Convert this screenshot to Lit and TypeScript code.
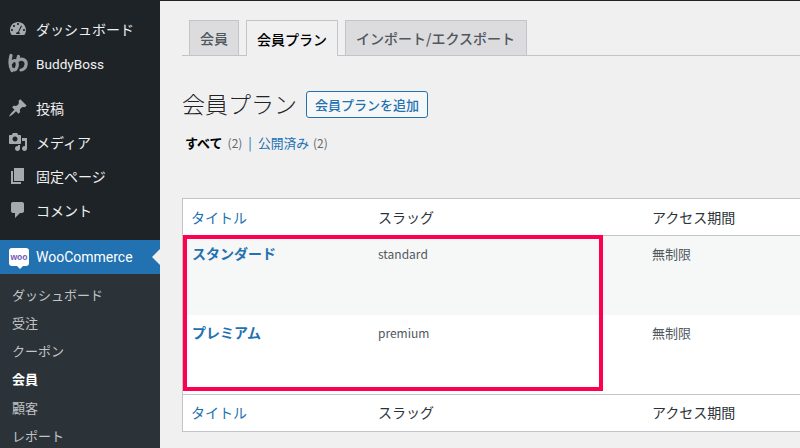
import { LitElement, html, css, svg } from "lit";
import { customElement } from "lit/decorators.js";

const icons = {
  dash: svg`<path d="M3.76 16h12.48c1.1-1.37 1.76-3.11 1.76-5 0-4.42-3.58-8-8-8s-8 3.58-8 8c0 1.89.66 3.63 1.76 5zM10 4c.55 0 1 .45 1 1s-.45 1-1 1-1-.45-1-1 .45-1 1-1zM6 6c.55 0 1 .45 1 1s-.45 1-1 1-1-.45-1-1 .45-1 1-1zm8.01 1L11 13c.6.5 1 1.2 1 2H8c0-1.1.9-2 2-2l3-6.5 1.01.5zM4 10c.55 0 1 .45 1 1s-.45 1-1 1-1-.45-1-1 .45-1 1-1zm12 0c.55 0 1 .45 1 1s-.45 1-1 1-1-.45-1-1 .45-1 1-1z"/>`,
  pin: svg`<path d="M10.44 3.02l1.82-1.82 6.36 6.35-1.83 1.82c-1.05-.68-2.48-.57-3.41.36l-.75.75c-.92.93-1.04 2.35-.35 3.41l-1.83 1.82-2.41-2.41-2.8 2.79c-.42.42-3.38 2.71-3.8 2.29s1.86-3.39 2.28-3.81l2.79-2.79L4.1 9.36l1.83-1.82c1.05.69 2.48.57 3.4-.36l.75-.75c.93-.92 1.05-2.35.36-3.41z"/>`,
  media: svg`<path d="M13 11V4c0-.55-.45-1-1-1h-1.67L9 1H5L3.67 3H2c-.55 0-1 .45-1 1v7c0 .55.45 1 1 1h10c.55 0 1-.45 1-1zM7 4.500c1.380 0 2.500 1.120 2.500 2.500S8.380 9.500 7 9.500 4.500 8.380 4.500 7 5.620 4.500 7 4.500zM14 6h5v10.500c0 1.380-1.120 2.500-2.500 2.500S14 17.880 14 16.500s1.120-2.500 2.500-2.500c.17 0 .34.02.5.05V9h-3V6zm-4 8.050V13h2v3.500c0 1.380-1.120 2.500-2.500 2.500S7 17.880 7 16.500 8.120 14 9.500 14c.17 0 .34.02.5.05z"/>`,
  page: svg`<path d="M6 15V2h10v13H6zm-1 1h8v2H3V5h2v11z"/>`,
  comment: svg`<path d="M5 2h9c1.100 0 2 .9 2 2v7c0 1.100-.9 2-2 2h-2l-5 5v-5H5c-1.100 0-2-.9-2-2V4c0-1.100.9-2 2-2z"/>`,
};

@customElement("app-root")
export class AppRoot extends LitElement {
  static styles = css`
    :host {
      display: block;
      width: 800px;
      height: 448px;
      overflow: hidden;
      background: #f0f0f1;
      font-family: "Noto Sans CJK JP", "Noto Sans", sans-serif;
      font-size: 13px;
      color: #3c434a;
    }
    .page { display: flex; width: 800px; height: 448px; }
    .side { width: 160px; flex: none; background: #1d2327; color: #f0f0f1; padding-top: 12px; box-sizing: border-box; }
    .item { height: 34px; display: flex; align-items: center; font-size: 14px; }
    .item svg { width: 20px; height: 20px; margin-left: 8px; fill: #a7aaad; flex: none; }
    .item span { margin-left: 8px; }
    .item .lat { font-family: Roboto, sans-serif; }
    .item .bbt { font-size: 13.600px; padding-top: 2px; }
    .item svg.bb { fill: none; stroke: #9a9da0; stroke-width: 3.200; stroke-linecap: round; }
    .g1 { margin-bottom: 11px; }
    .woo { background: #2271b1; color: #fff; margin-top: 13px; position: relative; }
    .woo .badge { position: relative; width: 20px; height: 18px; margin: -1px 0 0 9px; background: #fff; border-radius: 3px; color: #6f5bb5; font: 700 8.500px "Liberation Sans", sans-serif; display: flex; align-items: center; justify-content: center; flex: none; }
    .woo .badge::after { content: ""; position: absolute; left: 8px; bottom: -3px; border: 3px solid transparent; border-top-color: #fff; border-bottom-width: 0; }
    .woo span { margin-left: 7px; }
    .woo .arrow { position: absolute; right: 0; top: 9px; border: 8px solid transparent; border-right-color: #f0f0f1; border-left-width: 0; }
    .sub { background: #2c3338; padding-top: 6.300px; height: 200px; font-size: 13px; color: #c3c4c7; }
    .sub div { height: 28.200px; display: flex; align-items: center; padding-left: 12px; }
    .sub .on { color: #fff; font-weight: 700; }
    .main { flex: 1; min-width: 0; padding: 0 0 0 22px; border-top: 1px solid #1d2327; }
    .tabs { display: flex; gap: 7px; height: 35px; margin-top: 19px; border-bottom: 1px solid #c3c4c7; padding-left: 7px; box-sizing: content-box; }
    .tab { border: 1px solid #c3c4c7; border-bottom: none; background: #dcdcde; color: #50575e; font-weight: 500; font-size: 14px; padding: 0 11px 0 10px; display: flex; align-items: center; height: 34px; }
    .tab.short { padding: 0 10px; }
    .tab.on { background: #f0f0f1; color: #000; height: 35px; margin-bottom: -1px; padding: 0 10px; }
    .head { display: flex; align-items: center; margin-top: 32px; height: 32px; }
    h1 { margin: 0 0 3px; font-weight: 300; font-size: 23px; color: #1d2327; }
    .btn { margin-left: 9px; border: 1px solid #2271b1; border-radius: 3px; color: #2271b1; background: #f6f7f7; font-size: 13px; font-weight: 500; height: 27px; display: flex; align-items: center; padding: 0 8px; box-sizing: border-box; }
    .views { display: flex; align-items: center; margin-top: 12px; margin-left: 3px; font-size: 13px; color: #646970; height: 20px; }
    .views b { color: #000; font-weight: 700; margin-right: 5px; }
    .views a { color: #2271b1; font-size: 12.800px; margin-right: 4px; }
    .views em { font-style: normal; font-size: 12px; }
    .views i { font-style: normal; color: #2271b1; margin: 0 6px; }
    .wrap { position: relative; margin-top: 46px; }
    table { width: 640px; border-collapse: separate; border-spacing: 0; background: #fff; border: 1px solid #c3c4c7; table-layout: fixed; }
    col.a { width: 187px; } col.b { width: 274px; }
    th, td { text-align: left; font-weight: 400; padding: 0 0 0 8px; vertical-align: top; }
    th { height: 36px; vertical-align: middle; font-size: 14px; color: #2c3338; }
    th.link { color: #2271b1; }
    thead th { border-bottom: 1px solid #c3c4c7; }
    tfoot th { border-top: 1px solid #c3c4c7; height: 34px; padding-bottom: 2px; }
    td { height: 79px; padding-top: 7px; box-sizing: border-box; font-size: 12px; color: #50575e; line-height: 22px; }
    td.t { font-size: 14px; font-weight: 700; color: #2271b1; line-height: 20px; padding-left: 9px; }
    td.c { font-size: 13px; }
    tr.alt td { background: #f6f7f7; }
    .mark { position: absolute; left: 1px; top: 37px; width: 420px; height: 156px; border: 4px solid #ff0050; box-sizing: border-box; }
  `;

  private icon(p: unknown) {
    return html`<svg viewBox="0 0 20 20">${p}</svg>`;
  }

  render() {
    return html`<div class="page">
      <nav class="side">
        <div class="item">${this.icon(icons.dash)}<span>ダッシュボード</span></div>
        <div class="item g1"><svg class="bb" viewBox="0 0 20 20"><path d="M3 2.500C1.500 8 2 14 4 17.500M3 10C5 7 8 6.500 9 9.500C10 13 8 18 5.500 16.500M10.500 3.500L9 9M10 7.500C14 4.500 19 7 18 12C17.600 15 15 17 13 17"/></svg><span class="lat bbt">BuddyBoss</span></div>
        <div class="item">${this.icon(icons.pin)}<span>投稿</span></div>
        <div class="item">${this.icon(icons.media)}<span>メディア</span></div>
        <div class="item">${this.icon(icons.page)}<span>固定ページ</span></div>
        <div class="item">${this.icon(icons.comment)}<span>コメント</span></div>
        <div class="item woo"><div class="badge">woo</div><span class="lat">WooCommerce</span><div class="arrow"></div></div>
        <div class="sub">
          <div>ダッシュボード</div><div>受注</div><div>クーポン</div><div class="on">会員</div><div>顧客</div><div>レポート</div>
        </div>
      </nav>
      <main class="main">
        <div class="tabs">
          <div class="tab short">会員</div><div class="tab on">会員プラン</div><div class="tab">インポート/エクスポート</div>
        </div>
        <div class="head"><h1>会員プラン</h1><div class="btn">会員プランを追加</div></div>
        <div class="views"><b>すべて</b><em>(2)</em><i>|</i><a>公開済み</a><em>(2)</em></div>
        <div class="wrap">
          <table>
            <colgroup><col class="a" /><col class="b" /><col /></colgroup>
            <thead><tr><th class="link">タイトル</th><th>スラッグ</th><th>アクセス期間</th></tr></thead>
            <tbody>
              <tr class="alt"><td class="t">スタンダード</td><td>standard</td><td class="c">無制限</td></tr>
              <tr><td class="t">プレミアム</td><td>premium</td><td class="c">無制限</td></tr>
            </tbody>
            <tfoot><tr><th class="link">タイトル</th><th>スラッグ</th><th>アクセス期間</th></tr></tfoot>
          </table>
          <div class="mark"></div>
        </div>
      </main>
    </div>`;
  }
}
